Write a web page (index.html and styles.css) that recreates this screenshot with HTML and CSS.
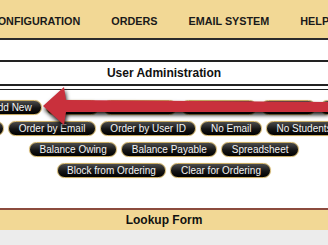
FILE: index.html
```html
<!DOCTYPE html>
<html lang="en">
<head>
    <meta charset="UTF-8">
    <meta name="viewport" content="width=device-width, initial-scale=1.0">
    <title>User Administration</title>
    <link rel="stylesheet" href="styles.css">
</head>
<body>
    <nav class="topnav">
        <a href="#">USERS</a>
        <a href="#">CONFIGURATION</a>
        <a href="#">ORDERS</a>
        <a href="#">EMAIL SYSTEM</a>
        <a href="#">HELP</a>
        <a href="#">LOGOUT</a>
    </nav>

    <div class="panel">
        <div class="panel-title">User Administration</div>
        <div class="panel-body">
            <div class="btn-row">
                <a class="pill" href="#">Volunteers</a>
                <a class="pill" href="#">Add New</a>
                <a class="pill" href="#">Search</a>
                <a class="pill" href="#">All Students</a>
                <a class="pill" href="#">All Teachers</a>
                <a class="pill" href="#">Parents</a>
                <a class="pill" href="#">Admins</a>
                <a class="pill" href="#">Staff</a>
            </div>
            <div class="btn-row">
                <a class="pill" href="#">Order by Name</a>
                <a class="pill" href="#">Order by Email</a>
                <a class="pill" href="#">Order by User ID</a>
                <a class="pill" href="#">No Email</a>
                <a class="pill" href="#">No Students</a>
                <a class="pill" href="#">No Orders</a>
            </div>
            <div class="btn-row">
                <a class="pill" href="#">Balance Owing</a>
                <a class="pill" href="#">Balance Payable</a>
                <a class="pill" href="#">Spreadsheet</a>
            </div>
            <div class="btn-row">
                <a class="pill" href="#">Block from Ordering</a>
                <a class="pill" href="#">Clear for Ordering</a>
            </div>
        </div>
    </div>

    <div class="lookup">
        <div class="lookup-title">Lookup Form</div>
        <div class="lookup-body"></div>
    </div>

    <!-- annotation arrow pointing at "Add New" -->
    <svg class="callout" width="328" height="245" viewBox="0 0 328 245">
        <polygon points="43,106 64,87 66,100 330,102 330,112 66,112 64,125" fill="#c9303c"/>
    </svg>
</body>
</html>
```

FILE: styles.css
```css
html, body {
    margin: 0;
    padding: 0;
    overflow: hidden;
}
body {
    font-family: "Liberation Sans", Arial, sans-serif;
    background-color: #fff;
    color: #111;
    position: relative;
    height: 245px;
}
.topnav {
    display: flex;
    justify-content: center;
    align-items: center;
    height: 34px;
    padding-top: 4px;
    background-color: #f2d895;
    border-bottom: 2px solid #2b2b2b;
}
.topnav a {
    flex: none;
    padding: 0 15.5px;
    color: #1a1a1a;
    font-size: 10.8px;
    font-weight: bold;
    text-decoration: none;
    white-space: nowrap;
}
.panel {
    margin-top: 20px;
}
.panel-title {
    border-top: 2px solid #222;
    border-bottom: 2px solid #222;
    height: 22px;
    line-height: 22px;
    text-align: center;
    font-size: 12px;
    font-weight: bold;
}
.panel-body {
    margin-top: 3px;
    border-top: 1px solid #222;
    padding-top: 10px;
    display: flex;
    flex-direction: column;
    gap: 6px;
}
.btn-row {
    display: flex;
    justify-content: center;
    gap: 4px;
}
.pill {
    flex: none;
    display: block;
    height: 13px;
    line-height: 13px;
    padding: 0 9.5px;
    border: 1px solid #c8ab63;
    border-radius: 8px;
    background: linear-gradient(#4c4c4c, #151515 55%, #000);
    box-shadow: 0 0 1px #e6cd86;
    color: #f4f4f4;
    font-size: 10px;
    text-decoration: none;
    white-space: nowrap;
}
.lookup {
    margin-top: 30px;
}
.lookup-title {
    border-top: 2px solid #8c4b3e;
    background-color: #f2d895;
    height: 20px;
    line-height: 20px;
    text-align: center;
    font-size: 12px;
    font-weight: bold;
}
.lookup-body {
    background-color: #ececec;
    height: 40px;
}
.callout {
    position: absolute;
    left: 0;
    top: 0;
    filter: drop-shadow(1px 3px 2px rgba(0, 0, 0, 0.9));
}
```
